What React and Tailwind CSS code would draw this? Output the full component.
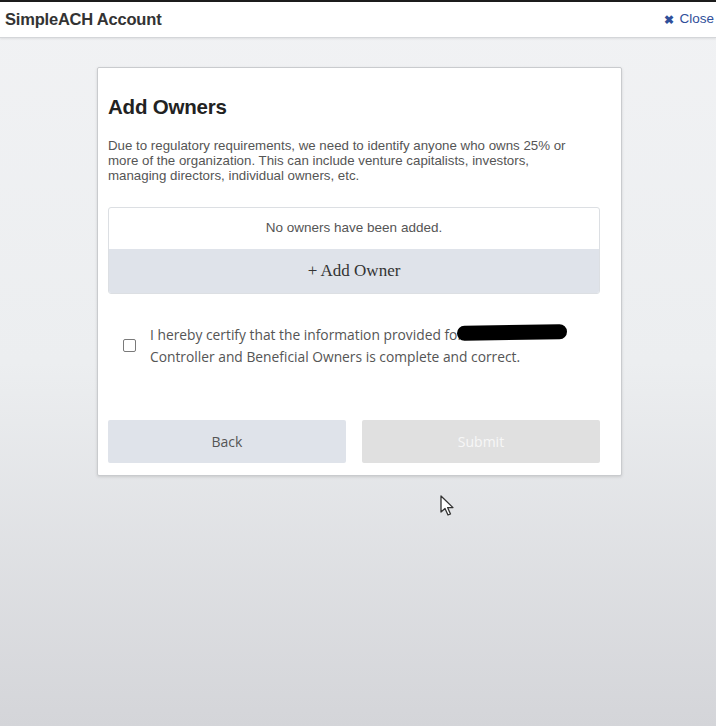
import React from "react"

const Cursor = () => (
    <svg width="18" height="24" viewBox="0 0 18 24" className="absolute left-[440px] top-[495px]">
        <path d="M1 1 L1 17 L5 13.5 L8 20 L10.5 19 L7.6 12.6 L13 12.6 Z" fill="#fff" stroke="#333" strokeWidth="1.3" strokeLinejoin="round" />
    </svg>
)

export default function App() {
    return (
        <div className="relative w-[716px] h-[726px] overflow-hidden flex flex-col font-['Liberation_Sans',Arial,sans-serif] bg-gradient-to-b from-[#f1f2f4] via-[#eceef0] to-[#d4d5d9]">
            {/* top bar */}
            <div className="h-[2px] bg-[#1c1c1c]" />
            <header className="h-[36px] bg-white flex items-center justify-between pl-[5px] pr-[2px] border-b border-[#d4d6d9] shadow-[0_1px_2px_rgba(0,0,0,0.08)]">
                <span className="text-[16.5px] font-bold text-[#333] tracking-[-0.2px]">SimpleACH Account</span>
                <button className="flex items-center gap-[5px] text-[13.5px] text-[#2f4f9a]">
                    <span className="font-bold text-[12px]">✖</span>
                    <span>Close</span>
                </button>
            </header>

            <div className="pt-[29px] pl-[97px]">
                {/* card */}
                <div className="w-[525px] h-[409px] bg-white border border-[#c9cbce] rounded-[2px] shadow-[0_1px_3px_rgba(0,0,0,0.12)] pl-[10px] pr-[21px] pt-[26px] flex flex-col">
                    <h1 className="text-[20.5px] font-bold text-[#222] leading-[26px] tracking-[-0.2px]">Add Owners</h1>
                    <p className="mt-[18px] text-[13.3px] leading-[15px] text-[#555] w-[478px]">
                        Due to regulatory requirements, we need to identify anyone who owns 25% or more of the organization. This can include venture capitalists, investors, managing directors, individual owners, etc.
                    </p>

                    <div className="mt-[24px] border border-[#dcdfe3] rounded-[3px] overflow-hidden">
                        <div className="h-[41px] flex items-center justify-center text-[13.5px] text-[#555]">
                            No owners have been added.
                        </div>
                        <button className="w-full h-[44px] bg-[#dfe3ea] flex items-center justify-center text-[17px] text-[#333] font-['Liberation_Serif','Times_New_Roman',serif]">
                            + Add Owner
                        </button>
                    </div>

                    <div className="mt-[30px] flex items-center pl-[15px]">
                        <div className="w-[13px] h-[13px] border border-[#7a7a7a] rounded-[2px] shrink-0 self-center mt-[-1px]" />
                        <p className="ml-[14px] text-[13.8px] leading-[22px] text-[#555] font-['Open_Sans',sans-serif]">
                            I hereby certify that the information provided for
                            <span className="inline-block align-middle ml-[-6px] w-[110px] h-[15px] bg-black rounded-full -rotate-1 mt-[-8px]" />
                            <br />
                            Controller and Beneficial Owners is complete and correct.
                        </p>
                    </div>

                    <div className="mt-auto mb-[12px] grid grid-cols-2 gap-[16px]">
                        <button className="h-[43px] bg-[#dfe3ea] rounded-[2px] text-[14px] text-[#555] font-['Open_Sans',sans-serif]">Back</button>
                        <button className="h-[43px] bg-[#e0e0e0] rounded-[2px] text-[14px] text-[#f7f7f7] font-['Open_Sans',sans-serif]">Submit</button>
                    </div>
                </div>
            </div>

            <Cursor />
        </div>
    )
}
